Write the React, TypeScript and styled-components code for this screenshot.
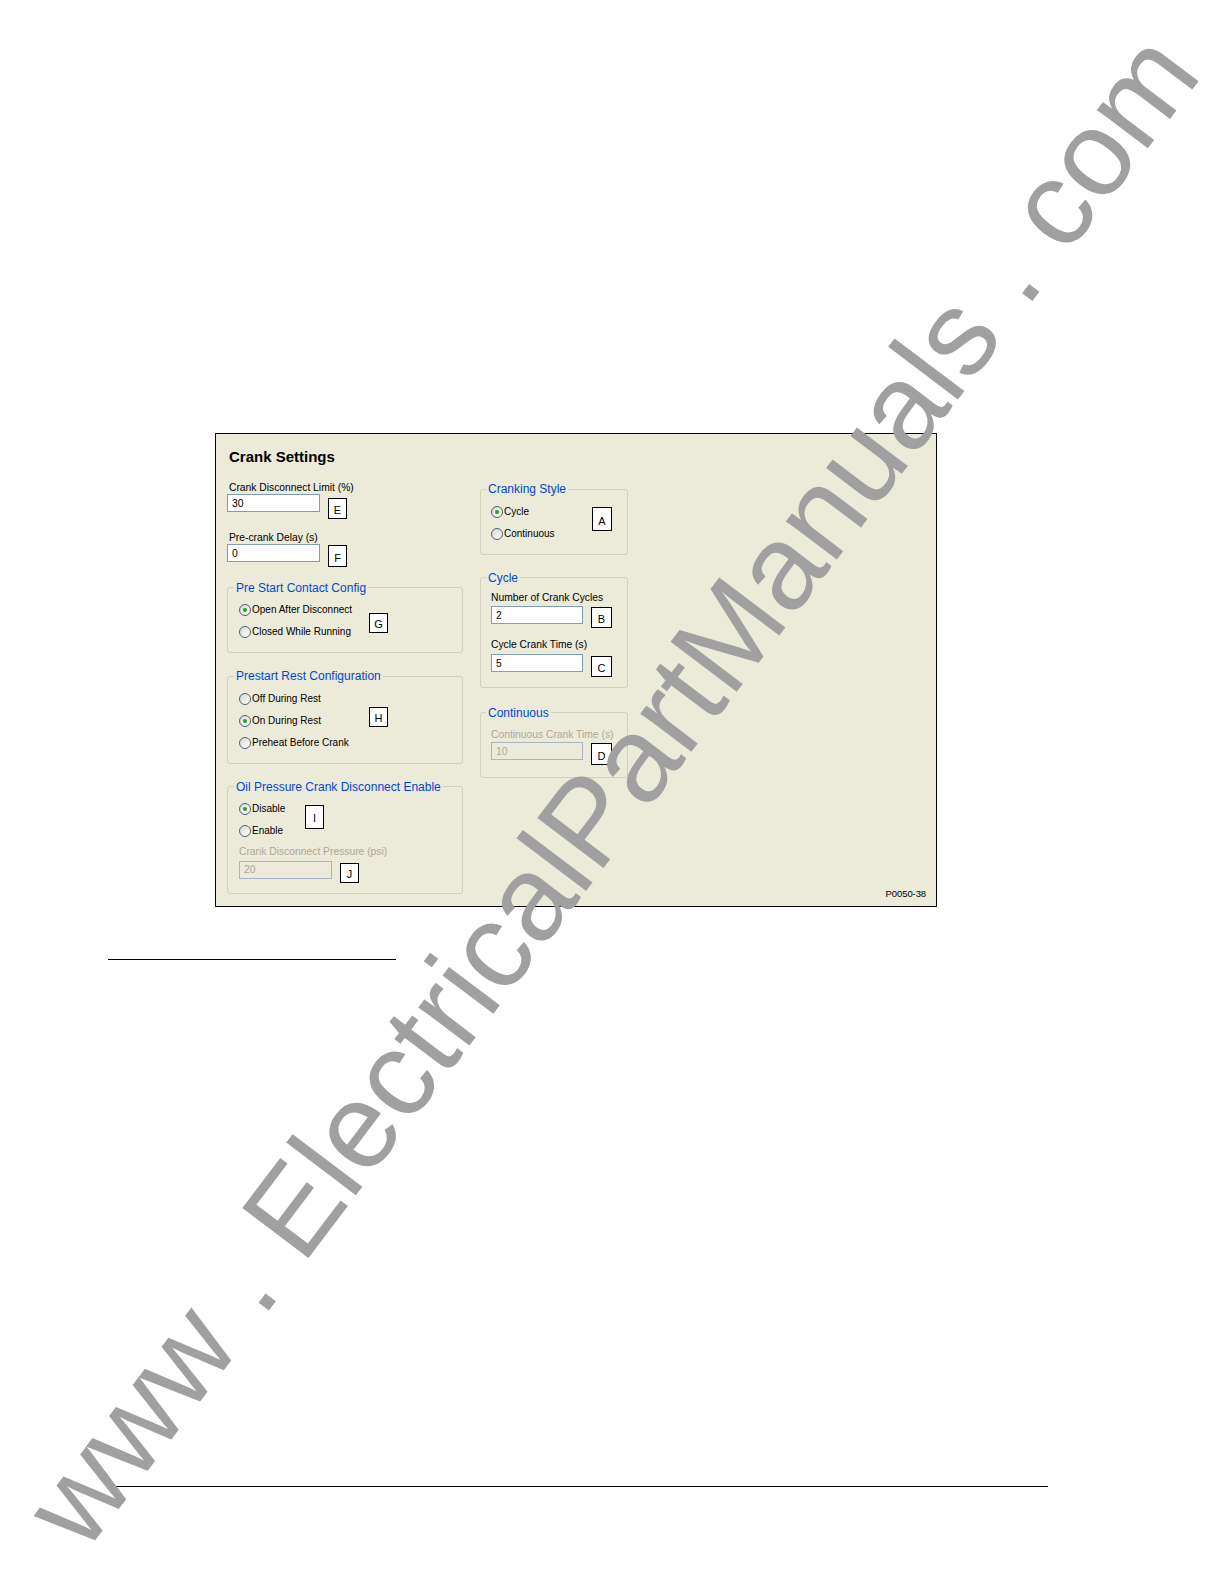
import styled, { createGlobalStyle } from 'styled-components'

const GlobalStyle = createGlobalStyle`
	html, body {
		margin: 0;
		padding: 0;
		background: #ffffff;
	}
	* {
		box-sizing: border-box;
	}
`

const App = () => {
	return (
		<Page>
			<GlobalStyle />
			<Panel>
				<PanelTitle>Crank Settings</PanelTitle>
				<Columns>
					<Column $w={236}>
						<FieldLabel $indent={2}>Crank Disconnect Limit (%)</FieldLabel>
						<FieldRow>
							<TextBox readOnly value="30" />
							<Tag $top={4} $w={19} $h={21}>E</Tag>
						</FieldRow>
						<FieldLabel $indent={2} $mt={13}>Pre-crank Delay (s)</FieldLabel>
						<FieldRow>
							<TextBox readOnly value="0" />
							<Tag $top={1} $w={19} $h={22}>F</Tag>
						</FieldRow>

						<Group $mt={13.5}>
							<Legend>Pre Start Contact Config</Legend>
							<GroupRow>
								<RadioList $w={130}>
									<Radio on label="Open After Disconnect" />
									<Radio label="Closed While Running" />
								</RadioList>
								<Tag $top={13.5} $w={19} $h={20}>G</Tag>
							</GroupRow>
						</Group>

						<Group $mt={16}>
							<Legend>Prestart Rest Configuration</Legend>
							<GroupRow>
								<RadioList $w={130}>
									<Radio label="Off During Rest" />
									<Radio on label="On During Rest" />
									<Radio label="Preheat Before Crank" />
								</RadioList>
								<Tag $top={19} $w={19} $h={20}>H</Tag>
							</GroupRow>
						</Group>

						<Group $mt={16} $pb={10}>
							<Legend>Oil Pressure Crank Disconnect Enable</Legend>
							<GroupRow>
								<RadioList $w={66}>
									<Radio on label="Disable" />
									<Radio label="Enable" />
								</RadioList>
								<Tag $top={6.5} $w={19} $h={24}>I</Tag>
							</GroupRow>
							<FieldLabel $muted $mt={4}>Crank Disconnect Pressure (psi)</FieldLabel>
							<FieldRow $mt={2.5}>
								<TextBox disabled value="20" $w={93} />
								<Tag $top={2} $w={19} $h={20}>J</Tag>
							</FieldRow>
						</Group>
					</Column>

					<Column $w={148}>
						<Group $pl={10}>
							<Legend>Cranking Style</Legend>
							<GroupRow>
								<RadioList $w={101}>
									<Radio on label="Cycle" />
									<Radio label="Continuous" />
								</RadioList>
								<Tag $top={6.5} $w={20} $h={24}>A</Tag>
							</GroupRow>
						</Group>

						<Group $mt={16} $pl={10} $pt={7} $pb={10}>
							<Legend>Cycle</Legend>
							<FieldLabel>Number of Crank Cycles</FieldLabel>
							<FieldRow $mt={2.6}>
								<TextBox readOnly value="2" $w={92} />
								<Tag $top={1} $w={21} $h={21}>B</Tag>
							</FieldRow>
							<FieldLabel $mt={11.4}>Cycle Crank Time (s)</FieldLabel>
							<FieldRow $mt={2.6}>
								<TextBox readOnly value="5" $w={92} />
								<Tag $top={2} $w={21} $h={21}>C</Tag>
							</FieldRow>
						</Group>

						<Group $mt={17.5} $pl={10} $pt={9} $pb={12}>
							<Legend>Continuous</Legend>
							<FieldLabel $muted>Continuous Crank Time (s)</FieldLabel>
							<FieldRow $mt={1.6}>
								<TextBox disabled value="10" $w={92} />
								<Tag $top={1} $w={21} $h={22}>D</Tag>
							</FieldRow>
						</Group>
					</Column>

					<FigureColumn>
						<FigureId>P0050-38</FigureId>
					</FigureColumn>
				</Columns>
			</Panel>

			<Rule $left={108} $width={288} $mt={52} />
			<Rule $left={106} $width={942} $mt={526} />

			<Watermark>www . ElectricalPartManuals . com</Watermark>
		</Page>
	)
}

const Radio = ({ label, on }: { label: string; on?: boolean }) => (
	<RadioRow>
		<RadioMark $on={on} />
		<RadioText>{label}</RadioText>
	</RadioRow>
)

const Page = styled.div`
	position: relative;
	width: 1224px;
	min-height: 1584px;
	padding-top: 433px;
	overflow: hidden;
	font-family: 'Liberation Sans', Arial, sans-serif;
`

const Panel = styled.div`
	margin-left: 215px;
	width: 722px;
	border: 1px solid #000;
	background: #ecead9;
	padding: 13.5px 10px 12px 11px;
	color: #000;
`

const PanelTitle = styled.div`
	margin-left: 2px;
	font-size: 15px;
	line-height: 17px;
	font-weight: bold;
	letter-spacing: 0;
`

const Columns = styled.div`
	display: flex;
	align-items: stretch;
	gap: 17px;
	margin-top: 17.5px;
`

const Column = styled.div<{ $w: number }>`
	display: flex;
	flex-direction: column;
	width: ${p => p.$w}px;
	flex: none;
`

const FigureColumn = styled.div`
	flex: 1;
	display: flex;
	align-items: flex-end;
	justify-content: flex-end;
`

const FigureId = styled.div`
	font-size: 9.5px;
	line-height: 11px;
	margin-bottom: -5.5px;
	letter-spacing: -0.1px;
`

const FieldLabel = styled.div<{ $indent?: number; $mt?: number; $muted?: boolean }>`
	font-size: 10.3px;
	line-height: 12px;
	margin-left: ${p => p.$indent || 0}px;
	margin-top: ${p => p.$mt || 0}px;
	color: ${p => (p.$muted ? '#aca899' : '#000')};
	white-space: nowrap;
`

const FieldRow = styled.div<{ $mt?: number }>`
	display: flex;
	align-items: flex-start;
	gap: 8px;
	margin-top: ${p => p.$mt || 0}px;
`

const TextBox = styled.input<{ $w?: number }>`
	width: ${p => p.$w || 93}px;
	height: 18px;
	margin: 0;
	padding: 0 0 0 4px;
	border: 1px solid #7f9db9;
	background: #ffffff;
	font-family: 'Liberation Sans', Arial, sans-serif;
	font-size: 10.3px;
	color: #000;
	outline: none;

	&:disabled {
		background: #ebeadb;
		border-color: #a9b4c2;
		color: #aca899;
	}
`

const Tag = styled.div<{ $top: number; $w: number; $h: number }>`
	flex: none;
	width: ${p => p.$w}px;
	height: ${p => p.$h}px;
	margin-top: ${p => p.$top}px;
	border: 1px solid #000;
	background: #ffffff;
	display: flex;
	align-items: center;
	justify-content: center;
	padding-top: 3px;
	font-size: 11px;
	line-height: 12px;
`

const Group = styled.fieldset<{ $mt?: number; $pl?: number; $pt?: number; $pb?: number }>`
	margin: ${p => p.$mt || 0}px 0 0 0;
	padding: ${p => p.$pt ?? 4.5}px 6px ${p => p.$pb ?? 9}px ${p => p.$pl ?? 11}px;
	border: 1px solid #d0d0bf;
	border-radius: 3px;
	min-inline-size: 0;
	display: flex;
	flex-direction: column;
`

const Legend = styled.legend`
	margin-left: -5px;
	padding: 0 2px;
	font-size: 12px;
	line-height: 14px;
	color: #0046d5;
	white-space: nowrap;
`

const GroupRow = styled.div`
	display: flex;
	align-items: flex-start;
`

const RadioList = styled.div<{ $w: number }>`
	display: flex;
	flex-direction: column;
	width: ${p => p.$w}px;
	flex: none;
`

const RadioRow = styled.div`
	display: flex;
	align-items: center;
	gap: 1px;
	height: 22px;
`

const RadioMark = styled.span<{ $on?: boolean }>`
	flex: none;
	width: 12px;
	height: 12px;
	border-radius: 50%;
	border: 1px solid #4b6079;
	background: linear-gradient(135deg, #d6d5cc 0%, #efeee8 55%, #ffffff 100%);
	display: flex;
	align-items: center;
	justify-content: center;

	&::after {
		content: '';
		display: ${p => (p.$on ? 'block' : 'none')};
		width: 4px;
		height: 4px;
		border-radius: 50%;
		background: #23a323;
	}
`

const RadioText = styled.span`
	font-size: 10px;
	line-height: 12px;
	white-space: nowrap;
`

const Rule = styled.div<{ $left: number; $width: number; $mt: number }>`
	margin-top: ${p => p.$mt}px;
	margin-left: ${p => p.$left}px;
	width: ${p => p.$width}px;
	height: 1px;
	background: #000;
`

const Watermark = styled.div`
	position: absolute;
	left: 85px;
	top: 1453px;
	font-family: 'Liberation Sans', Arial, sans-serif;
	font-size: 120.5px;
	line-height: 120px;
	color: #a0a0a0;
	white-space: nowrap;
	transform-origin: 0 101.6px;
	transform: rotate(-52.9deg);
	pointer-events: none;
`

export default App
